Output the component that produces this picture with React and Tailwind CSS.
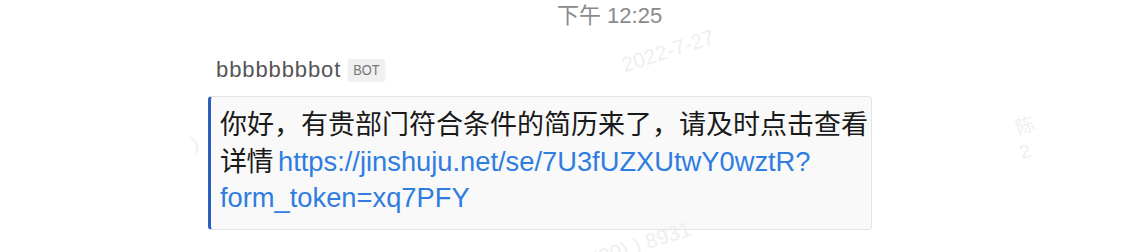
import React from "react";

const sans = { fontFamily: '"Liberation Sans", "Noto Sans CJK SC", sans-serif' };

function Watermark({ className, children }) {
  return (
    <div
      className={`absolute pointer-events-none select-none whitespace-nowrap text-[#efefef] -rotate-[18deg] ${className}`}
    >
      {children}
    </div>
  );
}

export default function App() {
  return (
    <div className="relative w-[1148px] h-[252px] bg-white overflow-hidden" style={sans}>
      <div className="flex flex-col items-start">
        <div className="ml-[557px] mt-[2px] text-[22px] leading-[28px] text-[#8a8a8a]">下午 12:25</div>

        <div className="ml-[216px] mt-[26px] flex items-center gap-[5px]">
          <span className="text-[22px] leading-[28px] tracking-[0.9px] text-[#555555]">bbbbbbbbot</span>
          <span className="bg-[#f0f0f0] text-[#777777] text-[14px] leading-[23px] px-[6px] rounded-[3px] scale-x-[0.92]">BOT</span>
        </div>

        <div className="ml-[208px] mt-[12px] w-[664px] h-[134px] bg-[#f9f9f9] border border-[#e3e3e3] border-l-[3px] border-l-[#2b5fbd] rounded-[4px] pl-[9px] pt-[10px]">
          <div className="text-[27px] leading-[36.5px] text-[#1a1a1a] whitespace-nowrap">
            <div>你好，有贵部门符合条件的简历来了，请及时点击查看</div>
            <div className="flex items-baseline">
              <span className="tracking-[-0.5px]">详情</span>
              <span className="ml-[5px] text-[#2f7de1] text-[27.3px]">https://jinshuju.net/se/7U3fUZXUtwY0wztR?</span>
            </div>
            <div className="text-[#2f7de1] text-[27.3px]">form_token=xq7PFY</div>
          </div>
        </div>
      </div>

      <Watermark className="left-[620px] top-[35px] text-[21px]">2022-7-27</Watermark>
      <Watermark className="left-[590px] top-[228px] text-[21px]">(20) ) 8931</Watermark>
      <Watermark className="left-[1016px] top-[112px] text-[19px]">陈</Watermark>
      <Watermark className="left-[1020px] top-[138px] text-[19px]">2</Watermark>
      <Watermark className="left-[192px] top-[130px] text-[19px]">)</Watermark>
    </div>
  );
}
